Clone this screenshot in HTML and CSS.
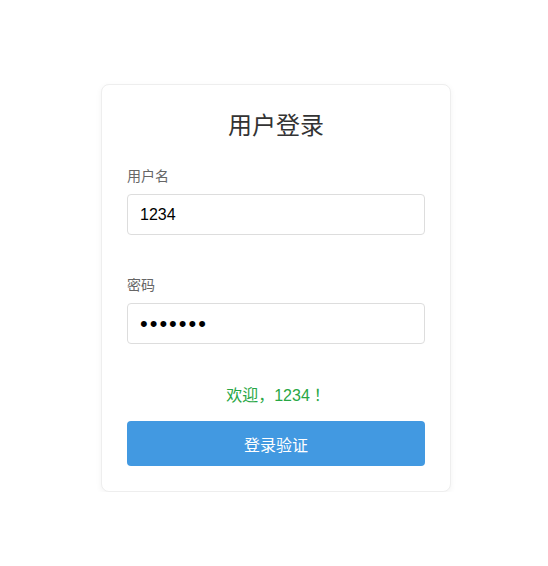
FILE: index.html
```html
<!DOCTYPE html>
<html>
<head>
	<title>用户登录</title>
	<link rel="stylesheet" href="styles.css">
</head>
<body>
	<div class="page">
		<div class="card">
			<h2 class="title">用户登录</h2>
			<div class="group">
				<label class="label" for="username">用户名</label>
				<input class="field" id="username" type="text" value="1234">
			</div>
			<div class="group">
				<label class="label" for="password">密码</label>
				<input class="field pass" id="password" type="password" value="1234567">
			</div>
			<div class="message">欢迎，1234！</div>
			<button class="btn">登录验证</button>
		</div>
	</div>
</body>
</html>
```

FILE: styles.css
```css
body {
	margin: 0;
	background: #fff;
	font-family: "Liberation Sans", "Noto Sans CJK SC", sans-serif;
}

.page {
	display: flex;
	justify-content: center;
	padding: 84px 0 0 4px;
}

.card {
	width: 350px;
	box-sizing: border-box;
	padding: 25px 25px 25px;
	border: 1px solid #eee;
	border-radius: 8px;
	box-shadow: 0 2px 6px rgba(0, 0, 0, 0.05);
	background: #fff;
}

.title {
	margin: 0 0 24px;
	font-size: 24px;
	font-weight: normal;
	line-height: 32px;
	text-align: center;
	color: #333;
}

.group {
	margin-bottom: 40px;
}

.label {
	display: block;
	margin-bottom: 8px;
	font-size: 14px;
	line-height: 20px;
	color: #666;
}

.field {
	display: block;
	width: 100%;
	box-sizing: border-box;
	height: 41px;
	padding: 0 12px;
	border: 1px solid #ddd;
	border-radius: 4px;
	font-family: "Liberation Sans", "Noto Sans CJK SC", sans-serif;
	font-size: 16px;
	color: #000;
}

.pass {
	font-size: 22px;
	letter-spacing: 2px;
}

.message {
	padding-top: 2px;
	margin-bottom: 15px;
	font-family: "Liberation Sans", "Noto Sans CJK KR", sans-serif;
	font-size: 16px;
	line-height: 20px;
	text-align: center;
	color: #28a745;
}

.btn {
	display: block;
	width: 100%;
	height: 45px;
	border: none;
	border-radius: 4px;
	background: #4299e1;
	color: #fff;
	font-family: "Liberation Sans", "Noto Sans CJK SC", sans-serif;
	font-size: 16px;
}
```
